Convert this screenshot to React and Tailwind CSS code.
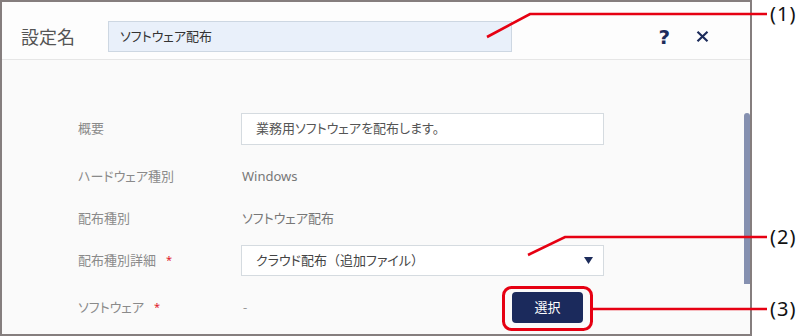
import React from "react";

const jp = "font-['Noto_Sans','Noto_Sans_CJK_JP',sans-serif] [font-feature-settings:'palt']";

function Row({ label, required, mt, h, children }) {
  return (
    <div className={`flex items-center ${mt} ${h}`}>
      <div className="w-[163px] shrink-0 text-[13px] text-[#8a8a8a] flex items-center">
        {label}
        {required && <span className="ml-[10px] text-[#e0202a] text-[11px]">*</span>}
      </div>
      {children}
    </div>
  );
}

export default function App() {
  const note = "absolute left-[770px] text-[20px] leading-[24px] text-[#111] font-['Noto_Sans',sans-serif] tracking-[1px]";
  return (
    <div className={`relative w-[805px] h-[336px] bg-white ${jp}`}>
      <div className="w-[752px] h-[336px] border-2 border-[#857e7e] flex flex-col">
        {/* header */}
        <div className="h-[58px] shrink-0 bg-[#fdfdfd] border-b border-[#e6e6e6] flex items-center pt-[12px] pl-[19px] pr-[41px]">
          <div className="w-[87px] text-[18px] text-[#555] leading-none">設定名</div>
          <div className="w-[404px] h-[31px] bg-[#e9f0fa] border border-[#cdd7e2] flex items-center pl-[11px] text-[13px] text-[#333]">
            ソフトウェア配布
          </div>
          <div className="flex-1" />
          <span className="text-[20px] font-bold text-[#1d2c5b] leading-none mr-[26px] font-['DejaVu_Sans',sans-serif]">?</span>
          <svg width="13" height="11" viewBox="0 0 13 11">
            <path d="M1.5 0.8 L11.5 10.2 M11.5 0.8 L1.5 10.2" stroke="#1d2c5b" strokeWidth="2.2" />
          </svg>
        </div>
        {/* body */}
        <div className="flex-1 bg-[#fafafa] flex">
          <div className="flex-1 pl-[76px] flex flex-col">
            <Row label="概要" mt="mt-[53px]" h="h-[32px]">
              <div className="w-[363px] h-[32px] bg-white border border-[#d5dbe0] flex items-center pl-[14px] text-[13px] text-[#555]">
                業務用ソフトウェアを配布します。
              </div>
            </Row>
            <Row label="ハードウェア種別" mt="mt-[22px]" h="h-[20px]">
              <span className="text-[13px] text-[#777] pl-[1px]">Windows</span>
            </Row>
            <Row label="配布種別" mt="mt-[22px]" h="h-[20px]">
              <span className="text-[13px] text-[#777] pl-[1px]">ソフトウェア配布</span>
            </Row>
            <Row label="配布種別詳細" required mt="mt-[16px]" h="h-[31px]">
              <div className="w-[363px] h-[31px] bg-white border border-[#d5dbe0] flex items-center pl-[14px] pr-[10px] text-[13px] text-[#444]">
                <span className="flex-1">
                  クラウド配布<span className="[font-feature-settings:normal]">（</span>追加ファイル<span className="[font-feature-settings:normal]">）</span>
                </span>
                <svg width="9" height="7" viewBox="0 0 9 7">
                  <path d="M0 0 H9 L4.5 7 Z" fill="#1d2c5b" />
                </svg>
              </div>
            </Row>
            <Row label="ソフトウェア" required mt="mt-[16px]" h="h-[31px]">
              <div className="w-[363px] flex items-center">
                <span className="flex-1 text-[13px] text-[#999] pl-[2px]">-</span>
                <button className="w-[71px] h-[31px] mr-[21px] rounded-[4px] bg-[#1b2a5c] text-white text-[13px]">
                  選択
                </button>
              </div>
            </Row>
          </div>
          <div className="w-[6px] flex flex-col">
            <div className="mt-[53px] h-[171px] bg-[#8590b0] rounded-t-[3px]" />
          </div>
        </div>
      </div>

      {/* annotations */}
      <svg className="absolute inset-0 pointer-events-none" width="805" height="336">
        <polyline points="487,37 530,14 767,14" fill="none" stroke="#e60012" strokeWidth="2.6" />
        <polyline points="528,255 565,237 767,237" fill="none" stroke="#e60012" strokeWidth="2.6" />
        <rect x="503.5" y="287.5" width="88" height="42" rx="8" fill="none" stroke="#e60012" strokeWidth="3" />
        <line x1="593" y1="309" x2="767" y2="309" stroke="#e60012" strokeWidth="2.6" />
      </svg>
      <span className={`${note} top-[2px]`}>(1)</span>
      <span className={`${note} top-[225px]`}>(2)</span>
      <span className={`${note} top-[297px]`}>(3)</span>
    </div>
  );
}
